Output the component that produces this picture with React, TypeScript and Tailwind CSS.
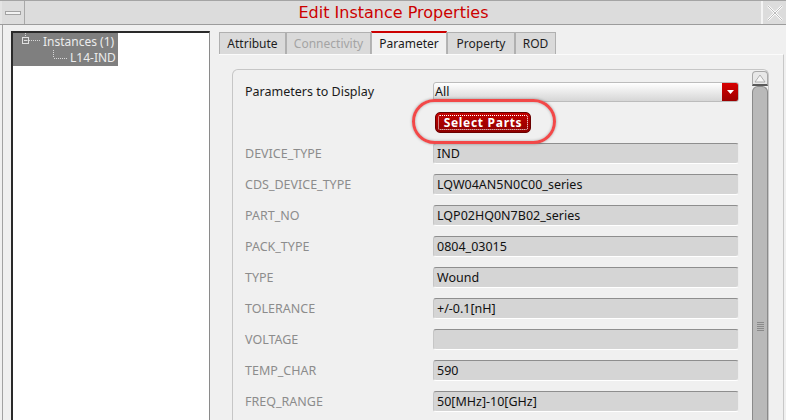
import React from 'react';

const rows: { label: string; value: string }[] = [
  { label: 'DEVICE_TYPE', value: 'IND' },
  { label: 'CDS_DEVICE_TYPE', value: 'LQW04AN5N0C00_series' },
  { label: 'PART_NO', value: 'LQP02HQ0N7B02_series' },
  { label: 'PACK_TYPE', value: '0804_03015' },
  { label: 'TYPE', value: 'Wound' },
  { label: 'TOLERANCE', value: '+/-0.1[nH]' },
  { label: 'VOLTAGE', value: '' },
  { label: 'TEMP_CHAR', value: '590' },
  { label: 'FREQ_RANGE', value: '50[MHz]-10[GHz]' },
];

const tabs = [
  { name: 'Attribute', w: 'w-[67px]', state: 'normal' },
  { name: 'Connectivity', w: 'w-[85px]', state: 'disabled' },
  { name: 'Parameter', w: 'w-[76px]', state: 'active' },
  { name: 'Property', w: 'w-[68px]', state: 'normal' },
  { name: 'ROD', w: 'w-[41px]', state: 'normal' },
];

function TitleBar() {
  return (
    <div className="flex h-[24px] bg-[#dcdcdc] border-b border-[#9c9c9c]">
      <div className="w-[25px] border-l-2 border-[#e4e4e4] border-r border-r-[#a8a8a8] flex items-center justify-center">
        <svg width="18" height="6" viewBox="0 0 18 6">
          <rect x="1.5" y="1.5" width="15" height="3" fill="#f2f2f2" stroke="#a2a2a2" />
        </svg>
      </div>
      <div className="flex-1 flex items-center justify-center font-['DejaVu_Sans',sans-serif] text-[16px] text-[#cc0000] pl-[1px]">
        Edit Instance Properties
      </div>
      <div className="w-[25px] border-l-2 border-[#f4f4f4] flex items-center justify-center">
        <svg width="18" height="18" viewBox="0 0 18 18">
          <path d="M2 2 L16 16 M16 2 L2 16" stroke="#ffffff" strokeWidth="2.2" />
          <path d="M2 2 L16 16 M16 2 L2 16" stroke="#b4b4b4" strokeWidth="0.9" />
        </svg>
      </div>
    </div>
  );
}

function Tree() {
  return (
    <div className="w-[199px] h-full bg-white border-l-2 border-t-2 border-[#2a2a2a] border-r border-r-[#8a8a8a]">
      <div className="w-[105px] h-[33px] bg-[#7f7f7f] text-[#ececec] text-[12px] leading-none">
        <div className="flex items-center h-[17px]">
          <svg width="30" height="17" viewBox="0 0 30 17" className="shrink-0">
            <path d="M12.5 0 V4" stroke="#d8d8d8" strokeDasharray="1 1" />
            <rect x="9.5" y="4.5" width="6" height="6" fill="none" stroke="#e0e0e0" />
            <path d="M11 7.5 H14.5" stroke="#e0e0e0" />
            <path d="M16 7.5 H28" stroke="#d8d8d8" strokeDasharray="1 1" />
          </svg>
          <span>Instances (1)</span>
        </div>
        <div className="flex items-center h-[16px]">
          <svg width="57" height="16" viewBox="0 0 57 16" className="shrink-0">
            <path d="M40.5 0 V8" stroke="#d8d8d8" strokeDasharray="1 1" fill="none" />
            <path d="M41 8.5 H54" stroke="#d8d8d8" strokeDasharray="1 1" fill="none" />
          </svg>
          <span>L14-IND</span>
        </div>
      </div>
    </div>
  );
}

function Tabs() {
  return (
    <div className="flex items-end h-[23px]">
      {tabs.map((t) =>
        t.state === 'active' ? (
          <div
            key={t.name}
            className={`${t.w} h-[24px] -mb-[1px] bg-[#f0f0f0] border-t-2 border-[#cc0000] border-x border-x-[#b4b4b4] flex items-center justify-center text-[12px] text-[#1a1a1a]`}
          >
            {t.name}
          </div>
        ) : (
          <div
            key={t.name}
            className={`${t.w} h-[22px] bg-[#dadada] border border-[#b0b0b0] border-b-0 flex items-center justify-center text-[12px] pt-[1px] ${
              t.state === 'disabled' ? 'text-[#a4a4a4]' : 'text-[#1e1e1e]'
            }`}
          >
            {t.name}
          </div>
        )
      )}
    </div>
  );
}

function Field({ value }: { value: string }) {
  return (
    <div className="h-[21px] rounded-[3px] bg-[#d5d5d5] border-t border-[#8e8e8e] border-b border-b-white border-r border-r-[#ededed] border-l border-l-[#c6c6c6] flex items-center pl-[3px] pt-[1px] text-[12.5px] text-[#111]">
      {value}
    </div>
  );
}

function Scrollbar() {
  return (
    <div className="w-[16px] mt-[1px] flex flex-col">
      <div className="h-[15px] rounded-t-[4px] bg-[#e8e8e8] border border-[#a8a8a8] border-b-2 border-b-[#5a5a5a] flex items-center justify-center">
        <svg width="12" height="9" viewBox="0 0 12 9">
          <path d="M6 1 L11 8 H1 Z" fill="#f6f6f6" stroke="#a0a0a0" strokeWidth="0.8" />
        </svg>
      </div>
      <div className="flex-1 rounded-t-[6px] bg-[#b9b9b9] border-x border-t border-[#8a8a8a] flex flex-col items-center pt-[235px]">
        <svg width="7" height="9" viewBox="0 0 7 9">
          <path d="M0 0.5 H7 M0 2.5 H7 M0 4.5 H7 M0 6.5 H7 M0 8.5 H7" stroke="#8a8a8a" strokeWidth="1" />
        </svg>
      </div>
    </div>
  );
}

export default function App() {
  return (
    <div className="w-[786px] h-[420px] overflow-hidden bg-[#f0f0f0] border-t border-[#a4a4a4] font-['Noto_Sans',sans-serif] flex flex-col">
      <TitleBar />
      <div className="flex-1 flex pl-[2px] min-h-0">
        <div className="flex flex-1 border-l border-[#a2a2a2] pl-[8px] pt-[6px] min-h-0">
          <Tree />
          <div className="ml-[9px] flex-1 flex flex-col min-h-0 pr-[2px]">
            <Tabs />
            <div className="flex-1 min-h-0 border-t border-[#fbfbfb] border-r border-r-[#c8c8c8] pl-[13px] pr-[14px] pt-[14px]">
              <div className="h-full rounded-t-[6px] border-t border-l border-r border-[#c6c6c6] flex">
                <div className="flex-1 pl-[12px] pr-[13px] pt-[12px] flex flex-col gap-[10px]">
                  <div className="flex items-center">
                    <div className="w-[188px] text-[12.5px] text-[#1a1a1a]">Parameters to Display</div>
                    <div className="flex-1 h-[20px] rounded-[3px] border border-[#bcbcbc] bg-gradient-to-b from-white to-[#d6d6d6] flex overflow-hidden">
                      <div className="flex-1 flex items-center pl-[1px] text-[12.5px] text-[#111]">All</div>
                      <div className="w-[16px] bg-gradient-to-b from-[#d80000] to-[#9c0000] flex items-center justify-center">
                        <svg width="7" height="4" viewBox="0 0 7 4">
                          <path d="M0 0 H7 L3.5 4 Z" fill="#ffffff" />
                        </svg>
                      </div>
                    </div>
                  </div>
                  <div className="flex">
                    <div className="w-[188px]" />
                    <div className="relative ml-[2px]">
                      <div className="absolute -left-[23px] -top-[13px] w-[144px] h-[45px] rounded-full border-[3px] border-[#f24848] shadow-[0_0_3px_rgba(0,0,0,0.35),inset_0_0_3px_rgba(0,0,0,0.3)]" />
                      <div className="w-[96px] h-[21px] rounded-[5px] bg-gradient-to-b from-[#c40000] to-[#8e0000] border border-[#6a0000] p-[2px]">
                        <div className="h-full border border-dotted border-white rounded-[2px] flex items-center justify-center text-white font-bold text-[12px] tracking-[0.7px] leading-none">
                          Select Parts
                        </div>
                      </div>
                    </div>
                  </div>
                  {rows.map((r) => (
                    <div key={r.label} className="flex items-center">
                      <div className="w-[188px] pt-[1px] text-[12.5px] text-[#8c8c8c]">{r.label}</div>
                      <div className="flex-1">
                        <Field value={r.value} />
                      </div>
                    </div>
                  ))}
                </div>
                <Scrollbar />
              </div>
            </div>
          </div>
        </div>
      </div>
    </div>
  );
}
